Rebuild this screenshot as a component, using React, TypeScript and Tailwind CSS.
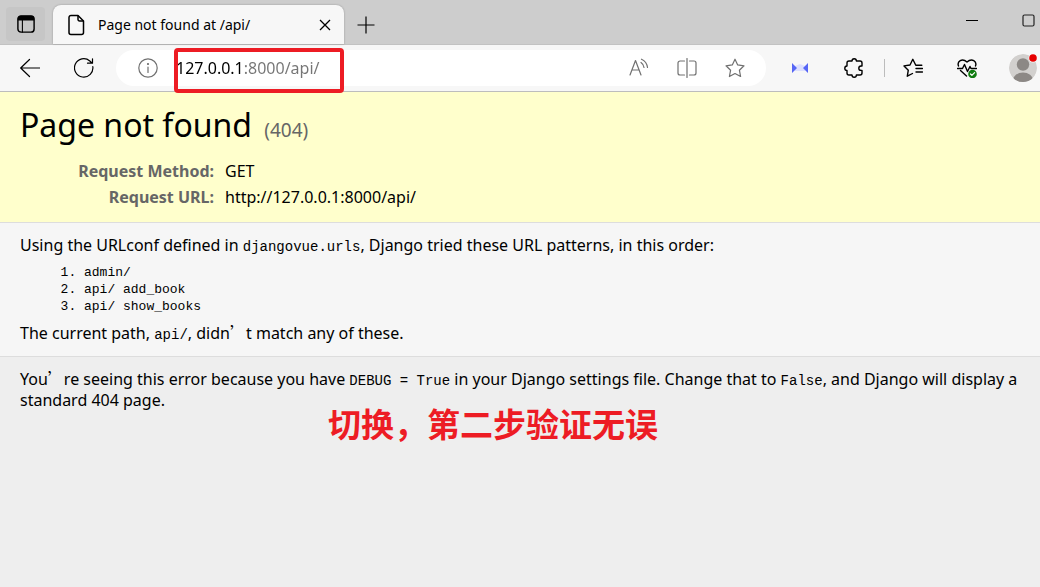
import type { ReactNode } from "react";

const patterns = ["admin/", "api/ add_book", "api/ show_books"];

function Icon({ children, className = "size-5" }: { children: ReactNode; className?: string }) {
  return (
    <svg
      viewBox="0 0 20 20"
      fill="none"
      stroke="currentColor"
      strokeWidth="1.2"
      strokeLinecap="round"
      strokeLinejoin="round"
      aria-hidden="true"
      className={className}
    >
      {children}
    </svg>
  );
}

function ToolButton({ label, children }: { label: string; children: ReactNode }) {
  return (
    <button type="button" aria-label={label} className="flex size-8 shrink-0 items-center justify-center rounded">
      {children}
    </button>
  );
}

function Code({ children }: { children: ReactNode }) {
  return <code className="font-['Liberation_Mono',monospace] text-sm leading-none">{children}</code>;
}

// Full-width apostrophe, as a Chinese font draws it
function Apostrophe() {
  return <span lang="zh-CN" className="font-['Noto_Sans_CJK_SC',sans-serif] leading-none">’</span>;
}

function TabStrip() {
  return (
    <div className="flex h-11 items-end bg-[#cdcdcd]">
      <button
        type="button"
        aria-label="Tab actions menu"
        className="ml-1.5 mb-[3px] flex h-[34px] w-[39px] items-center justify-center rounded bg-[#c6c6c6]"
      >
        <Icon className="size-[18px] text-black">
          <rect x="1" y="1" width="18" height="18" rx="3.500" strokeWidth="1.600" />
          <path d="M1.500 5.500V4a2.500 2.500 0 0 1 2.500-2.500h12a2.500 2.500 0 0 1 2.500 2.500v1.500z" fill="currentColor" />
          <path d="M6 6v13" />
        </Icon>
      </button>
      <div className="ml-2 flex h-[39px] w-[291px] items-center rounded-t-lg bg-[#f7f7f7] pl-[13px] pr-[7px] shadow-[0_0_2px_rgba(0,0,0,0.3)]">
        <svg viewBox="0 0 20 22" fill="none" stroke="black" strokeWidth="1.5" strokeLinejoin="round" aria-hidden="true" className="h-[22px] w-5">
          <path d="M5 1.5h7l5.500 5.500v11.500a2 2 0 0 1-2 2H5a2 2 0 0 1-2-2v-15a2 2 0 0 1 2-2z" />
          <path d="M12 1.500V5.500a1.500 1.500 0 0 0 1.500 1.500h4" />
        </svg>
        <span className="ml-3 flex-1 truncate text-sm text-black">Page not found at /api/</span>
        <button type="button" aria-label="Close tab" className="flex size-6 items-center justify-center">
          <svg viewBox="0 0 12 12" fill="none" stroke="black" strokeWidth="1.3" aria-hidden="true" className="size-3">
            <path d="M1 1l10 10M11 1L1 11" />
          </svg>
        </button>
      </div>
      <button type="button" aria-label="New tab" className="ml-1.5 mb-[3px] flex size-8 items-center justify-center">
        <svg viewBox="0 0 18 18" fill="none" stroke="black" strokeWidth="1.2" aria-hidden="true" className="size-[18px]">
          <path d="M9 .5v17M.5 9h17" />
        </svg>
      </button>
      <div className="ml-auto flex self-start pt-2">
        <button type="button" aria-label="Minimize" className="flex h-6 w-12 items-center justify-center">
          <svg viewBox="0 0 12 12" stroke="black" aria-hidden="true" className="size-3">
            <path d="M0 6.500h12" />
          </svg>
        </button>
        <button type="button" aria-label="Maximize" className="ml-2 flex h-6 w-9 items-center justify-end">
          <svg viewBox="0 0 18 13" fill="none" stroke="#222" strokeWidth="1.2" aria-hidden="true" className="h-[13px] w-[18px]">
            <rect x="1" y="1" width="11" height="11" rx="1.500" />
          </svg>
        </button>
      </div>
    </div>
  );
}

function Toolbar() {
  return (
    <div className="flex h-12 items-center border-b border-t border-b-[#bdbdbd] border-t-[#c2c2c2] bg-[#f7f7f7] pl-3.5 text-black">
      <ToolButton label="Back">
        <Icon>
          <path d="M19.500 10H.7M9.500 1.500L.7 10l8.800 8.500" />
        </Icon>
      </ToolButton>
      <div className="ml-[22px]">
        <ToolButton label="Refresh">
          <Icon>
            <path d="M18.800 8.500a9.200 9.200 0 1 1-3-5.500l2.200 2M18.500.8V5.200h-5" />
          </Icon>
        </ToolButton>
      </div>
      <form
        className="relative ml-4 flex h-9 flex-1 items-center rounded-full bg-white pl-4 pr-[15px] text-[#707070]"
        onSubmit={(e) => e.preventDefault()}
      >
        <ToolButton label="View site information">
          <Icon>
            <circle cx="10" cy="10" r="9.200" />
            <path d="M10 9v5.500" />
            <circle cx="10" cy="6" r=".5" fill="currentColor" />
          </Icon>
        </ToolButton>
        <input
          type="text"
          aria-label="Address"
          defaultValue="127.0.0.1:8000/api/"
          className="ml-3 min-w-0 flex-1 bg-[linear-gradient(to_right,#000_66px,#757575_66px)] bg-clip-text text-base text-transparent caret-black outline-none"
        />
        <div className="flex gap-4">
          <ToolButton label="Read aloud">
            <Icon>
              <path d="M1 17L6.500 2.500L12 17M3 12h7" />
              <path d="M12 4.500a7 7 0 0 1 3 5M12.500 1.200a10.500 10.500 0 0 1 6 8.300" />
            </Icon>
          </ToolButton>
          <ToolButton label="Split screen">
            <Icon>
              <path d="M7.500 3H3a2 2 0 0 0-2 2v10a2 2 0 0 0 2 2h4.500M12.500 3H17a2 2 0 0 1 2 2v10a2 2 0 0 1-2 2h-4.500M10 .5v19" />
            </Icon>
          </ToolButton>
          <ToolButton label="Add to favorites">
            <Icon>
              <path d="M10 1.200l2.700 5.700 6.300.9-4.600 4.400 1.200 6.300L10 15.500l-5.600 3 1.200-6.300L1 7.800l6.300-.9z" />
            </Icon>
          </ToolButton>
        </div>
        <div className="pointer-events-none absolute -top-0.5 left-[58px] h-[45px] w-[170px] rounded-sm border-4 border-[#ed1c24]" />
      </form>
      <div className="ml-[18px] flex items-center">
        <ToolButton label="Extension">
          <svg viewBox="0 0 16 12" aria-hidden="true" className="h-3 w-4">
            <path d="M3 4l5-2 5 2v5H3z" fill="#dcdfff" />
            <path d="M0 1l5 5-5 5zM16 1l-5 5 5 5z" fill="#5666f5" />
          </svg>
        </ToolButton>
        <div className="ml-[22px]">
          <ToolButton label="Extensions">
            <Icon>
              <path
                d="M5 3h3a2.200 2.200 0 0 1 4.400 0H16a2 2 0 0 1 2 2v3h-1a2.200 2.200 0 0 0 0 4.400h1V15a2 2 0 0 1-2 2h-3.600a2.200 2.200 0 0 1-4.400 0H5a2 2 0 0 1-2-2v-2.600a2.200 2.200 0 0 1 0-4.400V5a2 2 0 0 1 2-2z"
                strokeWidth="1.400"
              />
            </Icon>
          </ToolButton>
        </div>
        <div className="ml-3.5 h-[18px] w-px bg-[#bcbcbc]" />
        <div className="ml-3">
          <ToolButton label="Favorites">
            <Icon>
              <path
                d="M18.800 7.300h-6L9.800 1.300 7 7l-6 .9 4.300 4.300-1 6 5.200-2.700M13 10.500h6.500M13 14h6.500"
                strokeWidth="1.400"
              />
            </Icon>
          </ToolButton>
        </div>
        <div className="ml-[22px]">
          <ToolButton label="Browser essentials">
            <Icon>
              <path
                d="M1.500 8C-.2 3.500 5-.5 10 4c5-4.500 10.200-.5 8.500 4M.5 10.500h5l2-4 3 7 2.500-5 1 2h5.500M3.500 12.500l6 5.500"
                strokeWidth="1.400"
              />
              <circle cx="15.500" cy="16" r="4.300" fill="#107c10" stroke="none" />
              <path d="M13.500 16l1.400 1.400 2.700-2.800" stroke="white" />
            </Icon>
          </ToolButton>
        </div>
        <button type="button" aria-label="Profile" className="ml-[25px] flex size-8 items-center">
          <svg viewBox="0 0 32 32" aria-hidden="true" className="size-8">
            <defs>
              <clipPath id="avatar">
                <circle cx="15" cy="16" r="14" />
              </clipPath>
            </defs>
            <g clipPath="url(#avatar)">
              <circle cx="15" cy="16" r="14" fill="#d2d0ce" />
              <circle cx="15" cy="12.500" r="6.200" fill="#8c8885" />
              <ellipse cx="15" cy="28" rx="10" ry="7.500" fill="#8c8885" />
            </g>
            <circle cx="25" cy="6" r="4.500" fill="#f7f7f7" />
            <circle cx="25" cy="6" r="3.800" fill="#e60000" />
          </svg>
        </button>
      </div>
    </div>
  );
}

export default function App() {
  return (
    <div className="flex min-h-screen flex-col bg-[#eee] font-['Noto_Sans','Noto_Sans_CJK_SC',sans-serif] text-base text-black">
      <header>
        <TabStrip />
        <Toolbar />
      </header>

      <main className="leading-[21px]">
        <section className="border-b border-[#ddd] bg-[#ffc] px-5 pb-2.5 pt-3">
          <h1 className="mb-3.5 text-[32px] leading-[42px]">
            Page not found <small className="ml-1 text-[19px] leading-none text-[#666]">(404)</small>
          </h1>
          <table className="leading-[22px]">
            <tbody>
              <tr>
                <th scope="row" className="w-[194px] pb-1 text-right font-bold text-[#666]">Request Method:</th>
                <td className="pb-1 pl-[11px]">GET</td>
              </tr>
              <tr>
                <th scope="row" className="pb-1 text-right font-bold text-[#666]">Request URL:</th>
                <td className="pb-1 pl-[11px]">http://127.0.0.1:8000/api/</td>
              </tr>
            </tbody>
          </table>
        </section>

        <section className="border-b border-[#ddd] bg-[#f6f6f6] px-5 py-3">
          <p>
            Using the URLconf defined in <Code>djangovue.urls</Code>, Django tried these URL patterns, in this order:
          </p>
          <ol className="my-2 list-decimal pl-16 font-['Liberation_Mono',monospace] text-[13px] leading-[17px]">
            {patterns.map((pattern) => (
              <li key={pattern}>{pattern}</li>
            ))}
          </ol>
          <p>
            The current path, <Code>api/</Code>, didn<Apostrophe />t match any of these.
          </p>
        </section>

        <section className="relative px-5 pt-3">
          <p>
            You<Apostrophe />re seeing this error because you have <Code>DEBUG = True</Code> in your Django settings
            file. Change that to <Code>False</Code>, and Django will display a standard 404 page.
          </p>
          <strong
            lang="zh-CN"
            className="absolute left-[328px] top-[42px] whitespace-nowrap font-['Noto_Sans_CJK_SC',sans-serif] text-[33px] font-bold leading-[48px] text-[#ed1c24]"
          >
            切换，第二步验证无误
          </strong>
        </section>
      </main>
    </div>
  );
}
